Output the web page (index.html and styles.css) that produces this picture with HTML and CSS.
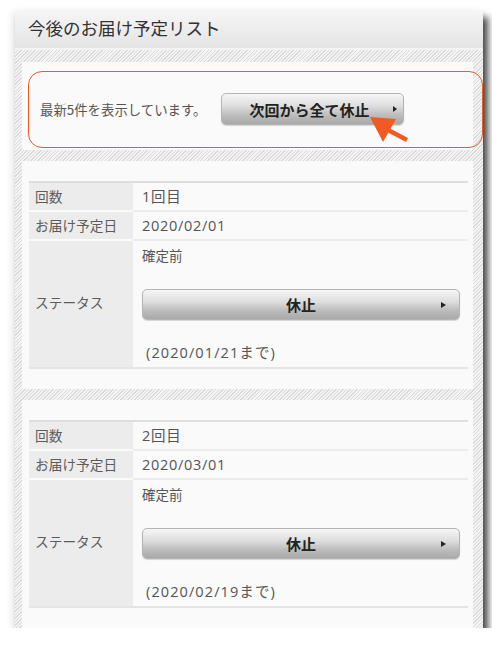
FILE: index.html
```html
<!DOCTYPE html>
<html lang="ja">
<head>
<meta charset="utf-8">
<title>今後のお届け予定リスト</title>
<link rel="stylesheet" href="styles.css">
</head>
<body>
<div class="frame">
  <header class="head">今後のお届け予定リスト</header>
  <div class="body">
    <section class="card notice">
      <span class="notice-text">最新5件を表示しています。</span>
      <button class="btn btn-all"><span class="btn-label">次回から全て休止</span><span class="tri"></span></button>
    </section>

    <section class="card">
      <div class="grid">
        <div class="lab">回数</div><div class="val">1回目</div>
        <div class="lab">お届け予定日</div><div class="val">2020/02/01</div>
        <div class="lab lab-status">ステータス</div>
        <div class="val val-status">
          <div class="st">確定前</div>
          <button class="btn btn-stop"><span class="btn-label">休止</span><span class="tri"></span></button>
          <div class="until">(2020/01/21まで)</div>
        </div>
      </div>
    </section>

    <section class="card">
      <div class="grid">
        <div class="lab">回数</div><div class="val">2回目</div>
        <div class="lab">お届け予定日</div><div class="val">2020/03/01</div>
        <div class="lab lab-status">ステータス</div>
        <div class="val val-status">
          <div class="st">確定前</div>
          <button class="btn btn-stop"><span class="btn-label">休止</span><span class="tri"></span></button>
          <div class="until">(2020/02/19まで)</div>
        </div>
      </div>
    </section>
  </div>

  <div class="annot-box"></div>
  <svg class="annot-arrow" width="60" height="45" viewBox="0 0 60 45">
    <line x1="33" y1="25" x2="52" y2="35" stroke="#f15a22" stroke-width="4.5" stroke-linecap="butt"/>
    <polygon points="15,12 28,37 41,14" fill="#f15a22"/>
  </svg>
</div>
</body>
</html>
```

FILE: styles.css
```css
* { box-sizing: border-box; }

html, body {
  margin: 0;
  padding: 0;
  background: #ffffff;
}

body {
  font-family: "Noto Sans CJK JP", "Noto Sans", sans-serif;
  color: #555;
  padding: 10px 0 0 15px;
}

.frame {
  position: relative;
  width: 468px;
  height: 618px;
  overflow: hidden;
  background: #f2f2f2;
  box-shadow: 5px 7px 7px rgba(0, 0, 0, 0.72), -3px 2px 8px rgba(0, 0, 0, 0.08);
}

.head {
  height: 40px;
  padding: 5px 0 0 13px;
  font-size: 17.5px;
  line-height: 26px;
  color: #333;
  background: linear-gradient(#f6f6f6, #e4e4e4);
  border-bottom: 2px solid #f4f4f4;
}

.body {
  padding: 12px 10px 0 7px;
  display: flex;
  flex-direction: column;
  gap: 11px;
  height: 578px;
  background: repeating-linear-gradient(135deg, #f4f4f4 0, #f4f4f4 1.5px, #dadada 1.5px, #dadada 2.5px);
}

.card {
  background: #fafafa;
  padding: 20px 5px 20px 7px;
  flex: none;
}

.notice {
  height: 88px;
  padding: 31px 0 0 18px;
  display: flex;
  align-items: flex-start;
  gap: 13px;
}

.notice-text {
  flex: none;
  width: 168px;
  font-size: 13.4px;
  line-height: 32px;
  color: #555;
  white-space: nowrap;
}

.btn {
  position: relative;
  display: flex;
  align-items: center;
  justify-content: center;
  font-family: inherit;
  font-weight: bold;
  color: #222;
  border: 1px solid #b4b4b4;
  border-radius: 5px;
  background: linear-gradient(#f6f6f6 0%, #dedede 40%, #bdbdbd 70%, #a9a9a9 100%);
  box-shadow: 0 1px 1px rgba(0, 0, 0, 0.15);
  padding: 0;
  cursor: pointer;
}

.btn-all {
  flex: none;
  width: 183px;
  height: 32px;
  font-size: 15px;
  padding-right: 6px;
}

.btn-stop {
  width: 318px;
  height: 31px;
  font-size: 15px;
  margin-top: 26px;
}

.tri {
  position: absolute;
  right: 13px;
  top: 50%;
  margin-top: -3px;
  width: 0;
  height: 0;
  border-left: 5px solid #222;
  border-top: 3px solid transparent;
  border-bottom: 3px solid transparent;
}

.btn-all .tri {
  right: 6px;
  border-left-width: 4px;
}

.grid {
  display: grid;
  grid-template-columns: 104px 1fr;
  border-top: 2px solid #dedede;
  border-bottom: 2px solid #e4e4e4;
}

.lab {
  background: #ececec;
  color: #5c5c5c;
  font-size: 13.7px;
  padding: 0 0 0 6px;
  height: 29px;
  line-height: 27px;
  border-bottom: 2px solid #fafafa;
  white-space: nowrap;
}

.val {
  color: #555;
  font-family: "Open Sans", "Noto Sans CJK JP", sans-serif;
  font-size: 14.5px;
  letter-spacing: 0.7px;
  padding: 0 0 0 9px;
  height: 29px;
  line-height: 27px;
  border-bottom: 2px solid #ececec;
}

.lab-status {
  height: auto;
  border-bottom: none;
  display: flex;
  align-items: center;
  padding-bottom: 4px;
}

.val-status {
  height: auto;
  border-bottom: none;
  padding: 6px 0 6px 9px;
  line-height: 16px;
}

.st {
  font-family: "Noto Sans CJK JP", sans-serif;
  font-size: 13.5px;
  letter-spacing: 0;
  line-height: 16px;
}

.val-status .btn {
  letter-spacing: 0;
  font-family: "Noto Sans CJK JP", sans-serif;
}

.until {
  margin-top: 25px;
  line-height: 16px;
  padding-left: 4px;
  letter-spacing: 1.1px;
}

.annot-box {
  position: absolute;
  left: 13px;
  top: 61px;
  width: 455px;
  height: 77px;
  border: 1.5px solid #f15a22;
  border-radius: 14px;
}

.annot-arrow {
  position: absolute;
  left: 340px;
  top: 95px;
}
```
